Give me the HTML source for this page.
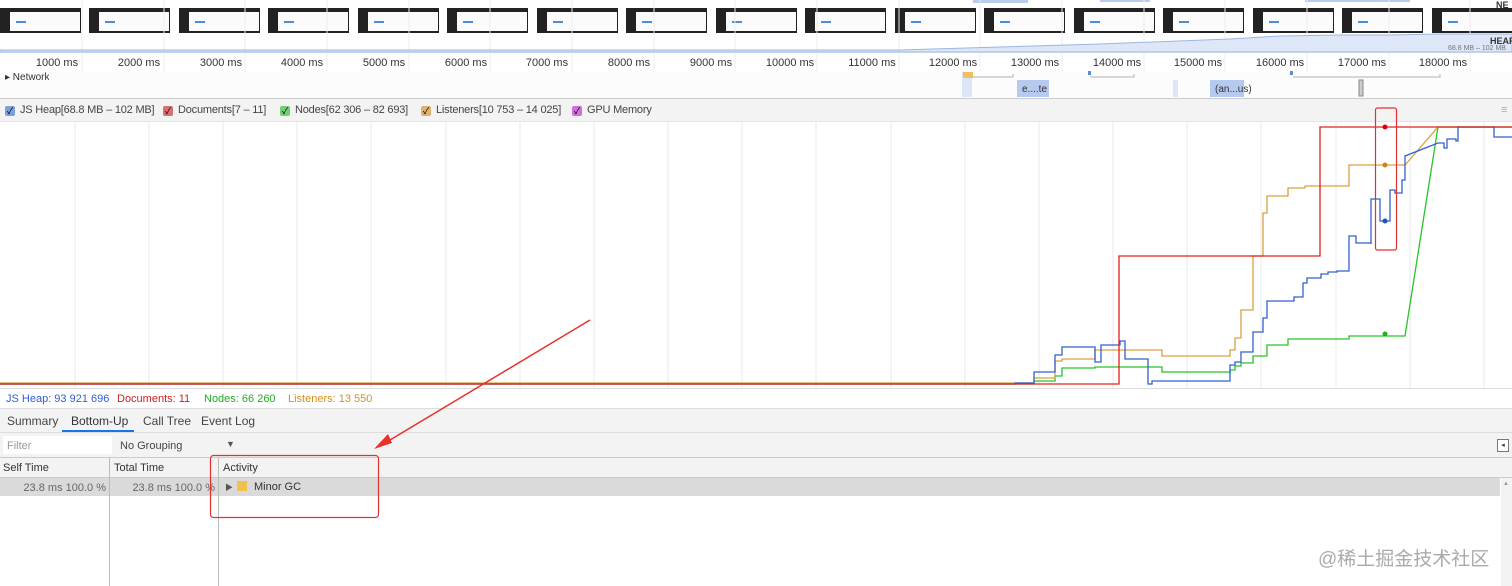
<!DOCTYPE html>
<html><head><meta charset="utf-8"><style>
body{margin:0;width:1512px;height:586px;overflow:hidden;background:#fff;font-family:"Liberation Sans","Noto Sans CJK SC",sans-serif;font-size:11px;color:#333;position:relative}
.a{position:absolute;white-space:nowrap}
.fr{position:absolute;top:8px;height:25px;width:81px;background:#222}
.fr i{position:absolute;left:10px;top:4px;right:1px;bottom:2px;background:#fbfbfb}
.fr b{position:absolute;left:16px;top:13px;width:10px;height:2px;background:#4a90d9}
.tl{position:absolute;top:57px;font-size:11px;color:#333;width:70px;text-align:center}
.cb{display:inline-block;width:10px;height:10px;border-radius:2px;vertical-align:-1px;margin-right:5px;font-size:9px;line-height:10px;text-align:center;color:#000}
.lg{position:absolute;top:104px;font-size:11px;color:#444;letter-spacing:-0.2px}
</style></head><body>
<div class="fr" style="left:0"><i></i><b></b></div>
<div class="fr" style="left:89px"><i></i><b></b></div>
<div class="fr" style="left:179px"><i></i><b></b></div>
<div class="fr" style="left:268px"><i></i><b></b></div>
<div class="fr" style="left:358px"><i></i><b></b></div>
<div class="fr" style="left:447px"><i></i><b></b></div>
<div class="fr" style="left:537px"><i></i><b></b></div>
<div class="fr" style="left:626px"><i></i><b></b></div>
<div class="fr" style="left:716px"><i></i><b></b></div>
<div class="fr" style="left:805px"><i></i><b></b></div>
<div class="fr" style="left:895px"><i></i><b></b></div>
<div class="fr" style="left:984px"><i></i><b></b></div>
<div class="fr" style="left:1074px"><i></i><b></b></div>
<div class="fr" style="left:1163px"><i></i><b></b></div>
<div class="fr" style="left:1253px"><i></i><b></b></div>
<div class="fr" style="left:1342px"><i></i><b></b></div>
<div class="fr" style="left:1432px"><i></i><b></b></div>
<div class="a" style="left:973px;top:0;width:55px;height:3px;background:#b8cdec"></div>
<div class="a" style="left:1100px;top:0;width:50px;height:2px;background:#b8cdec"></div>
<div class="a" style="left:1305px;top:0;width:105px;height:2px;background:#b8cdec"></div>
<div class="a" style="left:1496px;top:0;font-size:9px;font-weight:bold;color:#333">NE</div>
<svg class="a" style="left:0;top:0" width="1512" height="100">
<g stroke="#eee"><line x1="82" y1="0" x2="82" y2="100"/><line x1="164" y1="0" x2="164" y2="100"/><line x1="245" y1="0" x2="245" y2="100"/><line x1="327" y1="0" x2="327" y2="100"/><line x1="409" y1="0" x2="409" y2="100"/><line x1="490" y1="0" x2="490" y2="100"/><line x1="572" y1="0" x2="572" y2="100"/><line x1="654" y1="0" x2="654" y2="100"/><line x1="735" y1="0" x2="735" y2="100"/><line x1="817" y1="0" x2="817" y2="100"/><line x1="899" y1="0" x2="899" y2="100"/><line x1="980" y1="0" x2="980" y2="100"/><line x1="1062" y1="0" x2="1062" y2="100"/><line x1="1144" y1="0" x2="1144" y2="100"/><line x1="1225" y1="0" x2="1225" y2="100"/><line x1="1307" y1="0" x2="1307" y2="100"/><line x1="1389" y1="0" x2="1389" y2="100"/><line x1="1470" y1="0" x2="1470" y2="100"/></g>
<path d="M0 52 L0 50 L900 50 L1000 47 L1100 44 L1230 39 L1280 36 L1340 35 L1390 35 L1440 34 L1512 34 L1512 52Z" fill="#dde7f7" stroke="#9bb6e3"/>
<line x1="0" y1="52.5" x2="1512" y2="52.5" stroke="#c5d3ea"/>
<rect x="0" y="72" width="1512" height="26" fill="#fcfcfc"/>
<rect x="1017" y="80" width="32" height="17" fill="#b6c9ee"/>
<rect x="1210" y="80" width="34" height="17" fill="#b6c9ee"/>
<rect x="962" y="72" width="10" height="25" fill="#dbe7f7"/>
<rect x="1173" y="80" width="5" height="17" fill="#dbe7f7"/>
<rect x="1359" y="80" width="4" height="16" fill="#ccc" stroke="#888"/>
<rect x="963" y="72" width="10" height="6" fill="#f0c060"/>
<rect x="1088" y="71" width="3" height="4" fill="#5b8ed8"/>
<rect x="1290" y="71" width="3" height="4" fill="#5b8ed8"/>
<path d="M972 77 H1013 V74 M1090 77 H1134 V74 M1293 77 H1440 V74" stroke="#999" fill="none" stroke-width=".7"/>
<line x1="0" y1="98.5" x2="1512" y2="98.5" stroke="#ccc"/>
</svg>
<div class="tl" style="left:22px">1000 ms</div><div class="tl" style="left:104px">2000 ms</div><div class="tl" style="left:186px">3000 ms</div><div class="tl" style="left:267px">4000 ms</div><div class="tl" style="left:349px">5000 ms</div><div class="tl" style="left:431px">6000 ms</div><div class="tl" style="left:512px">7000 ms</div><div class="tl" style="left:594px">8000 ms</div><div class="tl" style="left:676px">9000 ms</div><div class="tl" style="left:755px">10000 ms</div><div class="tl" style="left:837px">11000 ms</div><div class="tl" style="left:918px">12000 ms</div><div class="tl" style="left:1000px">13000 ms</div><div class="tl" style="left:1082px">14000 ms</div><div class="tl" style="left:1163px">15000 ms</div><div class="tl" style="left:1245px">16000 ms</div><div class="tl" style="left:1327px">17000 ms</div><div class="tl" style="left:1408px">18000 ms</div>
<div class="a" style="left:1490px;top:36px;font-size:9px;font-weight:bold">HEAP</div>
<div class="a" style="left:1448px;top:45px;font-size:7px;color:#777">68.8 MB – 102 MB</div>
<div class="a" style="left:5px;top:72px;font-size:10px;color:#333;height:8px;overflow:hidden">▸ Network</div>
<div class="a" style="left:1022px;top:84px;font-size:10px;color:#333">e....te</div>
<div class="a" style="left:1215px;top:84px;font-size:10px;color:#333">(an...us)</div>
<div class="a" style="left:0;top:99px;width:1512px;height:22px;background:#f3f3f3;border-bottom:1px solid #e4e4e4"></div>
<div class="lg" style="left:5px"><span class="cb" style="background:#7c9fd9">✓</span>JS Heap[68.8 MB – 102 MB]</div>
<div class="lg" style="left:163px"><span class="cb" style="background:#d77070">✓</span>Documents[7 – 11]</div>
<div class="lg" style="left:280px"><span class="cb" style="background:#72d072">✓</span>Nodes[62 306 – 82 693]</div>
<div class="lg" style="left:421px"><span class="cb" style="background:#e0b070">✓</span>Listeners[10 753 – 14 025]</div>
<div class="lg" style="left:572px"><span class="cb" style="background:#d070d8">✓</span>GPU Memory</div>
<div class="a" style="left:1501px;top:104px;color:#aaa">≡</div>
<svg class="a" style="left:0;top:122px" width="1512" height="268" viewBox="0 122 1512 268">
<g stroke="#eaeaea"><line x1="75" y1="122" x2="75" y2="388"/><line x1="149" y1="122" x2="149" y2="388"/><line x1="223" y1="122" x2="223" y2="388"/><line x1="297" y1="122" x2="297" y2="388"/><line x1="371" y1="122" x2="371" y2="388"/><line x1="446" y1="122" x2="446" y2="388"/><line x1="520" y1="122" x2="520" y2="388"/><line x1="594" y1="122" x2="594" y2="388"/><line x1="668" y1="122" x2="668" y2="388"/><line x1="742" y1="122" x2="742" y2="388"/><line x1="816" y1="122" x2="816" y2="388"/><line x1="891" y1="122" x2="891" y2="388"/><line x1="965" y1="122" x2="965" y2="388"/><line x1="1039" y1="122" x2="1039" y2="388"/><line x1="1113" y1="122" x2="1113" y2="388"/><line x1="1187" y1="122" x2="1187" y2="388"/><line x1="1261" y1="122" x2="1261" y2="388"/><line x1="1336" y1="122" x2="1336" y2="388"/><line x1="1410" y1="122" x2="1410" y2="388"/><line x1="1484" y1="122" x2="1484" y2="388"/></g>
<line x1="0" y1="388.5" x2="1512" y2="388.5" stroke="#ddd"/>
<g fill="none" stroke-width="1.3">
<path stroke="#27c427" d="M0 384 H1034 V381 H1055 V376 H1062 V368 H1095 V367 H1162 V372 H1230 V370 H1235 V366 H1241 V363 H1253 V356 H1267 V345 H1288 V339 H1349 V336 H1405 L1438 127 H1512"/>
<path stroke="#d9a040" d="M0 383 H1034 V378 H1055 V361 H1062 V359 H1095 V350 H1162 V356 H1230 V350 H1235 V338 H1241 V310 H1253 V256 H1263 V213 H1267 V196 H1288 V188 H1305 V186 H1349 V165 H1405 L1438 127 H1512"/>
<path stroke="#3360d0" d="M0 384 H1015 V383 H1034 V372 H1055 V355 H1062 V347 H1095 V362 H1101 V345 H1120 V341 H1125 V359 H1148 V384 H1152 V381 H1230 V365 H1235 V362 H1241 V352 H1253 V332 H1263 V318 H1267 V301 H1294 V297 H1303 V283 H1307 V278 H1321 V274 H1328 V272 H1337 V271 H1349 V236 H1356 V243 H1371 V244 V199 H1380 V221 H1390 V190 H1395 V193 H1402 V180 H1405 V156 L1438 143 H1444 V148 H1447 V139 H1456 V141 H1458 V127 H1494 V137 H1512"/>
<path stroke="#e02020" d="M0 384 H1119 V256 H1320 V127 H1512"/>
</g>
<circle cx="1385" cy="127" r="2.5" fill="#d00"/><circle cx="1385" cy="165" r="2.5" fill="#d08010"/><circle cx="1385" cy="221" r="2.5" fill="#2050c0"/><circle cx="1385" cy="334" r="2.5" fill="#20b020"/>
</svg>
<div class="a" style="left:0;top:389px;width:1512px;height:19px;background:#fff;border-bottom:1px solid #ddd"></div>
<div class="a" style="top:393px;left:6px;color:#2f5fd0">JS Heap: 93 921 696</div>
<div class="a" style="top:393px;left:117px;color:#d02020">Documents: 11</div>
<div class="a" style="top:393px;left:204px;color:#20b020">Nodes: 66 260</div>
<div class="a" style="top:393px;left:288px;color:#d09020">Listeners: 13 550</div>
<div class="a" style="left:0;top:409px;width:1512px;height:23px;background:#f3f3f3;border-bottom:1px solid #ddd"></div>
<div class="a" style="top:414px;left:7px;font-size:12px;color:#444">Summary</div>
<div class="a" style="top:414px;left:71px;font-size:12px;color:#333">Bottom-Up</div>
<div class="a" style="top:430px;left:62px;width:72px;height:2px;background:#1a73e8"></div>
<div class="a" style="top:414px;left:143px;font-size:12px;color:#444">Call Tree</div>
<div class="a" style="top:414px;left:201px;font-size:12px;color:#444">Event Log</div>
<div class="a" style="left:0;top:433px;width:1512px;height:24px;background:#f3f3f3;border-bottom:1px solid #ccc"></div>
<div class="a" style="left:3px;top:436px;width:109px;height:18px;background:#fff"></div>
<div class="a" style="top:440px;left:7px;color:#999">Filter</div>
<div class="a" style="top:440px;left:120px;color:#444">No Grouping</div>
<div class="a" style="top:439px;left:226px;color:#555;font-size:9px">▼</div>
<div class="a" style="top:439px;left:1497px;width:10px;height:11px;border:1px solid #777;font-size:7px;line-height:11px;text-align:center;background:#fff">◂</div>
<div class="a" style="left:0;top:458px;width:1512px;height:19px;background:#f3f3f3;border-bottom:1px solid #ccc"></div>
<div class="a" style="top:462px;left:3px;color:#333">Self Time</div>
<div class="a" style="top:462px;left:114px;color:#333">Total Time</div>
<div class="a" style="top:462px;left:223px;color:#333">Activity</div>
<div class="a" style="left:0;top:478px;width:1500px;height:18px;background:#dadada"></div>
<div class="a" style="top:482px;left:0;width:106px;text-align:right;color:#666">23.8 ms 100.0 %</div>
<div class="a" style="top:482px;left:110px;width:105px;text-align:right;color:#666">23.8 ms 100.0 %</div>
<div class="a" style="top:482px;left:225px;font-size:8px;color:#555">▶</div>
<div class="a" style="top:481px;left:237px;width:10px;height:10px;background:#f0c24d"></div>
<div class="a" style="top:481px;left:254px;color:#333">Minor GC</div>
<div class="a" style="left:109px;top:458px;width:1px;height:128px;background:#bbb"></div>
<div class="a" style="left:218px;top:458px;width:1px;height:128px;background:#bbb"></div>
<div class="a" style="left:1501px;top:478px;width:11px;height:108px;background:#f3f3f3"></div>
<div class="a" style="left:1503px;top:481px;font-size:6px;color:#999">▲</div>
<div class="a" style="left:1318px;top:544px;font-size:19px;color:#aaa">@稀土掘金技术社区</div>
<svg class="a" style="left:0;top:0;pointer-events:none" width="1512" height="586">
<path d="M590 320 L385 443" stroke="#e8312a" stroke-width="1.5"/>
<path d="M374 449 L388 434 L392 443Z" fill="#e8312a"/>
<rect x="210.5" y="455.5" width="168" height="62" rx="3" fill="none" stroke="#e53030" stroke-width="1.2"/>
<rect x="1375.5" y="108" width="21" height="142" rx="2" fill="none" stroke="#e53030" stroke-width="1.2"/>
</svg>
</body></html>
